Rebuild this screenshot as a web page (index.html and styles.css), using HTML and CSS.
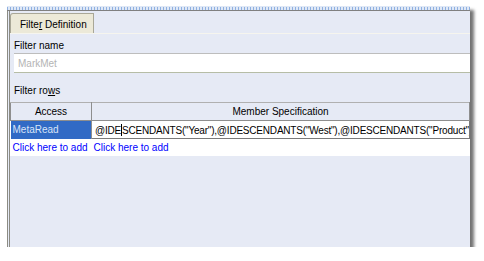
FILE: index.html
```html
<!doctype html>
<html lang="en">
<head>
    <meta charset="UTF-8">
    <title>Filter Definition</title>
    <link rel="stylesheet" href="styles.css">
</head>
<body>
<div class="frame">
    <div class="dots"></div>
    <div class="panel">
        <div class="tabs">
            <div class="tab">Filte<u>r</u> Definition</div>
        </div>
        <div class="body">
            <label class="lbl" for="fname">Filter name</label>
            <div class="field"><input id="fname" type="text" placeholder="MarkMet"></div>
            <div class="lbl rows-lbl">Filter ro<u>w</u>s</div>
            <div class="grid">
                <table>
                    <tr>
                        <th class="c1">Access</th>
                        <th>Member Specification</th>
                    </tr>
                    <tr>
                        <td class="sel">MetaRead</td>
                        <td class="edit">@IDE<span class="caret"></span>SCENDANTS("Year"),@IDESCENDANTS("West"),@IDESCENDANTS("Product")</td>
                    </tr>
                    <tr>
                        <td class="add">Click here to add</td>
                        <td class="add">Click here to add</td>
                    </tr>
                </table>
            </div>
        </div>
    </div>
</div>
</body>
</html>
```

FILE: styles.css
```css
* {
    box-sizing: border-box;
}

body {
    margin: 0;
    background: #fff;
    font-family: "Liberation Sans", Arial, sans-serif;
    font-size: 10px;
    color: #000;
}

.frame {
    margin: 6px 0 0 7px;
    width: 463px;
    height: 241px;
    display: flex;
    flex-direction: column;
    box-shadow: 4px 4px 3px rgba(0, 0, 0, 0.55);
}

.dots {
    height: 5px;
    background: repeating-linear-gradient(90deg, #8fb0e0 0 1px, #dfe8f6 1px 3px);
    border-bottom: 1px solid #808080;
    border-top: 1px solid #dfe8f6;
}

.panel {
    flex: 1;
    background: #e6eaf5;
    border-left: 3px double #8c8c84;
    display: flex;
    flex-direction: column;
}

.tabs {
    padding: 2px 0 0 0;
    border-bottom: 1px solid #f6f5ee;
}

.tab {
    width: 84px;
    height: 20px;
    background: #ece9d8;
    border: 1px solid #a9a797;
    border-bottom: none;
    border-radius: 3px 0 0 0;
    padding: 5px 0 0 9px;
    white-space: nowrap;
}

.body {
    display: flex;
    flex-direction: column;
}

.lbl {
    padding: 6px 0 0 4px;
    height: 19px;
}

.field {
    margin-left: 4px;
}

.field input {
    display: block;
    width: 100%;
    height: 20px;
    border: none;
    border-top: 1px solid #bdbdbd;
    border-bottom: 1px solid #b6bda6;
    padding: 0 4px;
    font-family: inherit;
    font-size: 10px;
    background: #fff;
}

.field input::placeholder {
    color: #b4b4b4;
}

.rows-lbl {
    padding-top: 12px;
    height: 29px;
}

.grid {
    background: #fff;
    height: 54px;
    overflow: hidden;
}

table {
    border-collapse: collapse;
    width: 100%;
    table-layout: fixed;
}

th, td {
    height: 18px;
    padding: 0 2px;
    white-space: nowrap;
    overflow: hidden;
    font-weight: normal;
}

th {
    background: #e6eaf5;
    border: 1px solid #8e8e8e;
    border-top: 1px solid #b0b0b0;
    text-align: center;
}

th.c1 {
    width: 81px;
}

td {
    border-right: 1px solid #8e8e8e;
}

.sel {
    background: #316ac5;
    color: #d8e4f8;
}

.edit {
    border: 1px solid #7a7a7a;
    padding-left: 3px;
    letter-spacing: -0.2px;
}

.caret {
    display: inline-block;
    width: 1px;
    height: 12px;
    background: #000;
    vertical-align: -2px;
}

.add {
    color: #0000ff;
    border-right: none;
}
```
